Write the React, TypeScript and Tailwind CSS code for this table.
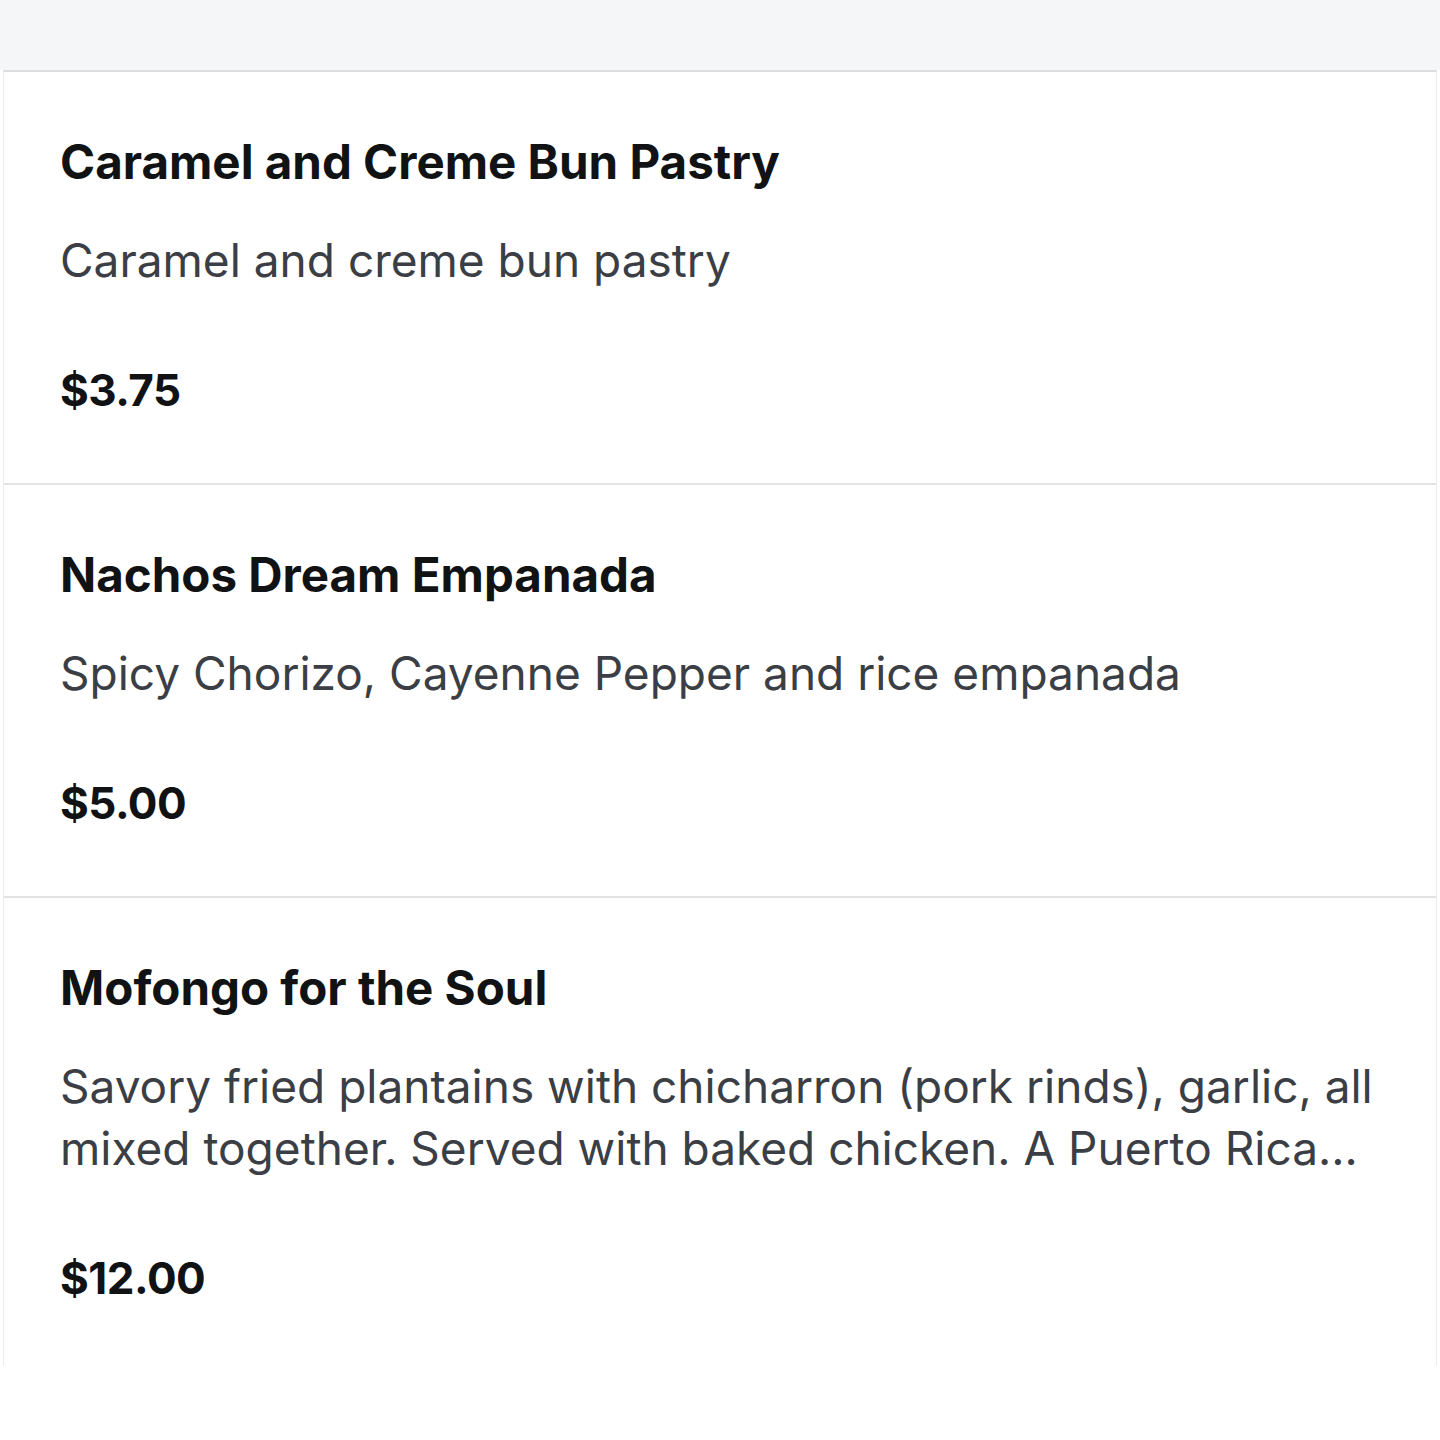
import React from 'react';

const items = [
  {
    title: 'Caramel and Creme Bun Pastry',
    description: 'Caramel and creme bun pastry',
    price: '$3.75',
  },
  {
    title: 'Nachos Dream Empanada',
    description: 'Spicy Chorizo, Cayenne Pepper and rice empanada',
    price: '$5.00',
  },
  {
    title: 'Mofongo for the Soul',
    description:
      'Savory fried plantains with chicharron (pork rinds), garlic, all mixed together. Served with baked chicken. A Puerto Rican classic dish.',
    price: '$12.00',
  },
];

const MenuItem = ({ item, last }: { item: (typeof items)[number]; last: boolean }) => (
  <div className={last ? 'px-[56px] pt-[59px] pb-[56px]' : 'px-[56px] pt-[59px] pb-[62px] border-b-2 border-[#e2e3e5]'}>
    <h3 className="text-[47.5px] leading-[62px] font-bold text-[#111214]">{item.title}</h3>
    <p className="mt-[36px] text-[46px] leading-[62px] text-[#3b3e44] line-clamp-2">{item.description}</p>
    <div className="mt-[68px] text-[44px] leading-[62px] font-bold text-[#111214] tracking-[-0.5px]">{item.price}</div>
  </div>
);

export default function App() {
  return (
    <div className="min-h-[1440px] bg-white" style={{ fontFamily: 'Inter, "Noto Sans", sans-serif' }}>
      <div className="h-[70px] bg-[#f5f6f8]" />
      <div className="mx-[3px] border-t-2 border-x border-t-[#dcdddf] border-x-[#ebecee] bg-white">
        {items.map((item, i) => (
          <MenuItem key={item.title} item={item} last={i === items.length - 1} />
        ))}
      </div>
    </div>
  );
}
